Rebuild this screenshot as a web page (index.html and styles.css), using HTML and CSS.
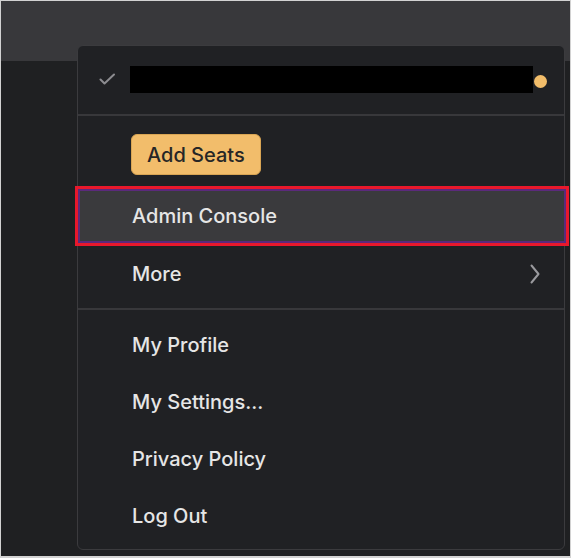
FILE: index.html
```html
<!DOCTYPE html>
<html lang="en">
<head>
<meta charset="utf-8">
<title>Account menu</title>
<link rel="stylesheet" href="styles.css">
</head>
<body>
<div class="frame">
  <header class="topbar"></header>
  <main class="app"></main>

  <nav class="menu">
    <div class="account">
      <svg class="check" width="16" height="12" viewBox="0 0 16 12"><path d="M1.5 6.5 L5.5 10.5 L15 1.5" fill="none" stroke="#8c8c90" stroke-width="2" stroke-linecap="round" stroke-linejoin="round"/></svg>
      <div class="redacted"></div>
      <span class="dot"></span>
    </div>
    <div class="sep"></div>
    <div class="section mid">
      <div class="seats-wrap"><button class="seats">Add Seats</button></div>
      <div class="item active">Admin Console</div>
      <div class="item more">More
        <svg class="chev" width="10" height="20" viewBox="0 0 10 20"><path d="M1.5 1.5 L8.5 10 L1.5 18.5" fill="none" stroke="#9a9a9e" stroke-width="2" stroke-linecap="round" stroke-linejoin="round"/></svg>
      </div>
    </div>
    <div class="sep"></div>
    <div class="section bottom">
      <div class="item">My Profile</div>
      <div class="item">My Settings...</div>
      <div class="item">Privacy Policy</div>
      <div class="item">Log Out</div>
    </div>
  </nav>
</div>
</body>
</html>
```

FILE: styles.css
```css
* { box-sizing: border-box; }
html, body { margin: 0; padding: 0; background: #ffffff; }
body { font-family: Inter, "Liberation Sans", Arial, sans-serif; }

.frame {
  position: relative;
  width: 571px;
  height: 558px;
  border: 1px solid #d2d2d2;
  border-bottom-width: 2px;
  display: flex;
  flex-direction: column;
  background: #202123;
}
.topbar { height: 60px; background: #38383b; flex: none; }
.app { flex: 1; background: #1f2022; }

.menu {
  position: absolute;
  left: 76px;
  top: 44px;
  width: 488px;
  border: 1px solid #3b3b3e;
  border-radius: 6px;
  background: #202124;
  color: #e6e6e6;
  font-size: 20px;
  font-weight: 500;
}

.account {
  height: 68px;
  display: flex;
  align-items: center;
  padding: 0 17px 0 21px;
}
.check { flex: none; margin-right: 15px; margin-top: -2px; }
.redacted { flex: 1; height: 27px; background: #000; margin-top: -1px; }
.dot {
  flex: none;
  width: 13px;
  height: 13px;
  border-radius: 50%;
  background: #f2bd6a;
  margin-left: 1px;
  margin-top: 2px;
}

.sep { height: 2px; background: #38383b; }

.section.mid { padding: 18px 0 6px; }
.seats-wrap { padding-left: 53px; margin-bottom: 12px; }
.seats {
  height: 41px;
  padding: 0 15px;
  border: 1px solid #d9a554;
  border-radius: 6px;
  background: #f2bd6b;
  color: #262626;
  font: inherit;
}

.item {
  height: 57px;
  display: flex;
  align-items: center;
  padding-left: 54px;
  position: relative;
}
.item.active { height: 58px; background: #3a3a3d; }
.item.active::after {
  content: "";
  position: absolute;
  left: -3px;
  right: -5px;
  top: -1px;
  bottom: -1px;
  border: 3px solid #e8182c;
  box-shadow: inset 0 0 0 2px #5b2a7c;
}
.item.more { justify-content: space-between; padding-right: 24px; }
.chev { flex: none; }

.section.bottom { padding: 6px 0 5px; }
```
